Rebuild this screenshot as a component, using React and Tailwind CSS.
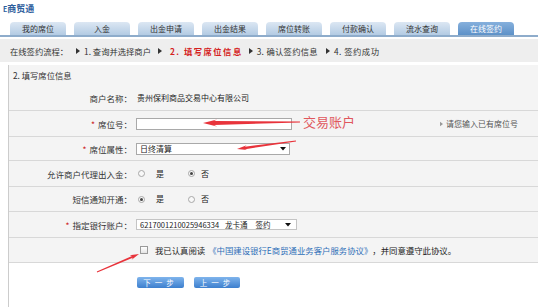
import React from "react";

const tabs = ["我的席位", "入金", "出金申请", "出金结果", "席位转账", "付款确认", "流水查询", "在线签约"];

// tapered red arrow used for the screenshot annotations
function arrowPoints(hx, hy, tx, ty, headLen, headW, neckW, tailW) {
  const dx = tx - hx, dy = ty - hy;
  const L = Math.hypot(dx, dy);
  const ux = dx / L, uy = dy / L;
  const px = -uy, py = ux;
  const at = (d, w) => [hx + ux * d + px * w, hy + uy * d + py * w];
  const pts = [
    at(0, 0),
    at(headLen, headW / 2),
    at(headLen * 0.8, neckW / 2),
    at(L, tailW / 2),
    at(L, -tailW / 2),
    at(headLen * 0.8, -neckW / 2),
    at(headLen, -headW / 2),
  ];
  return pts.map((p) => p.map((v) => v.toFixed(1)).join(",")).join(" ");
}

function Tri({ className = "" }) {
  return (
    <svg width="4" height="6" viewBox="0 0 4 6" className={className}>
      <path d="M0 0 L4 3 L0 6 Z" fill="currentColor" />
    </svg>
  );
}

function Caret() {
  return (
    <svg width="6" height="4" viewBox="0 0 6 4">
      <path d="M0 0 H6 L3 3.5 Z" fill="#111" />
    </svg>
  );
}

function Radio({ on }) {
  return (
    <span className="w-[7px] h-[7px] rounded-full border border-[#a8a8a8] bg-[#f8f8f8] flex items-center justify-center">
      {on && <span className="w-[3px] h-[3px] rounded-full bg-[#444]" />}
    </span>
  );
}

function Row({ h, label, req, children, extra }) {
  return (
    <div className={`flex items-center border-b border-[#d8d8d8] whitespace-nowrap ${h}`}>
      <div className="w-[123px] shrink-0 text-right text-[8.5px] leading-[12px] text-[#333]">
        {req && <span className="text-[#cc2222] mr-[3px]">*</span>}
        {label}
      </div>
      <div className="ml-[4px] min-w-[296px] shrink-0 flex items-center">{children}</div>
      {extra}
    </div>
  );
}

export default function App() {
  return (
    <div className="relative w-[538px] h-[307px] overflow-hidden bg-white text-[#333] font-['Noto_Sans_CJK_SC','Noto_Sans',sans-serif]">
      {/* title */}
      <div className="h-[22px] pl-[3px] pt-[3px] text-[9px] leading-[12px] font-bold text-[#2c5d9c]">
        <span className="text-[7px]">E</span>商贸通
      </div>

      {/* tabs */}
      <div className="flex gap-[8px] pl-[10px] border-b-2 border-[#8eaccb]">
        {tabs.map((t, i) =>
          i === tabs.length - 1 ? (
            <div
              key={t}
              className="w-[56px] h-[13px] rounded-t-[4px] bg-gradient-to-b from-[#86b0dc] to-[#5d91c8] text-white text-[8px] leading-[13px] text-center"
            >
              {t}
            </div>
          ) : (
            <div
              key={t}
              className="w-[56px] h-[13px] rounded-t-[4px] bg-gradient-to-b from-[#dce7f3] to-[#b3cbe3] text-[#333] text-[8px] leading-[13px] text-center"
            >
              {t}
            </div>
          )
        )}
      </div>

      {/* step bar */}
      <div className="mt-[2px] h-[23px] bg-[#eeeeee] flex items-center pl-[10px] pt-[1px] text-[8.3px] text-[#333] whitespace-nowrap">
        <span>在线签约流程：</span>
        <Tri className="ml-[8px] text-[#333]" />
        <span className="ml-[4px]">1. 查询并选择商户</span>
        <Tri className="ml-[7px] text-[#333]" />
        <span className="ml-[8px] text-[#d42020] font-bold tracking-[1.5px]">2. 填写席位信息</span>
        <Tri className="ml-[6px] text-[#333]" />
        <span className="ml-[4px] tracking-[0.3px]">3. 确认签约信息</span>
        <Tri className="ml-[8px] text-[#333]" />
        <span className="ml-[4px] tracking-[0.5px]">4. 签约成功</span>
      </div>

      {/* form panel */}
      <div className="mt-[3px] ml-[8px] h-[250px] border-l border-[#cccccc]">
        <div className="bg-[#f4f4f4]">
          <div className="h-[20px] flex items-center pl-[4px] text-[8.3px] text-[#333]">2. 填写席位信息</div>

          <Row h="h-[26px]" label="商户名称：">
            <span className="ml-[1px] text-[8px] text-[#222]">贵州保利商品交易中心有限公司</span>
          </Row>

          <Row
            h="h-[26px]"
            label="席位号："
            req
            extra={
              <div className="ml-[8px] flex items-center gap-[3px] text-[8px] text-[#555]">
                <Tri className="text-[#999] w-[3px]" />
                <span>请您输入已有席位号</span>
              </div>
            }
          >
            <div className="w-[156px] h-[12px] border border-[#a9a9a9] bg-white" />
          </Row>

          <Row h="h-[24px]" label="席位属性：" req>
            <div className="w-[154px] h-[12px] border border-[#a9a9a9] bg-white flex items-center justify-between pl-[3px] pr-[3px]">
              <span className="text-[8px] text-[#222] leading-[10px]">日终清算</span>
              <Caret />
            </div>
          </Row>

          <Row h="h-[26px]" label="允许商户代理出入金：">
            <div className="flex items-center text-[8px] text-[#222]">
              <span className="ml-[2px]"><Radio /></span>
              <span className="ml-[11px]">是</span>
              <span className="ml-[24px]"><Radio on /></span>
              <span className="ml-[6px]">否</span>
            </div>
          </Row>

          <Row h="h-[25px]" label="短信通知开通：">
            <div className="flex items-center text-[8px] text-[#222]">
              <span className="ml-[2px]"><Radio on /></span>
              <span className="ml-[11px]">是</span>
              <span className="ml-[24px]"><Radio /></span>
              <span className="ml-[6px]">否</span>
            </div>
          </Row>

          <Row h="h-[26px]" label="指定银行账户：" req>
            <div className="w-[161px] h-[11px] border border-[#c4c4c4] bg-white flex items-center pl-[3px] pr-[5px] text-[7.5px] text-[#222] leading-[10px]">
              <span>6217001210025946334</span>
              <span className="ml-[6px]">龙卡通</span>
              <span className="ml-[8px]">签约</span>
              <span className="ml-auto"><Caret /></span>
            </div>
          </Row>

          <Row h="h-[25px]" label="">
            <div className="flex items-center text-[8.4px]">
              <span className="ml-[4px] shrink-0 w-[8px] h-[8px] border border-[#9a9a9a] bg-gradient-to-b from-white to-[#e4e4e4]" />
              <span className="ml-[7px] text-[#222]">我已认真阅读</span>
              <span className="ml-[3px] text-[#2f6fb8]">《中国建设银行E商贸通业务客户服务协议》</span>
              <span className="text-[#222]">，并同意遵守此协议。</span>
            </div>
          </Row>
        </div>

        {/* buttons */}
        <div className="flex gap-[10px] pl-[128px] mt-[14px]">
          <button className="w-[47px] h-[11px] rounded-[2px] bg-gradient-to-b from-[#7fb4ec] to-[#3c7fce] text-white text-[7.5px] leading-[11px] tracking-[4px]">
            下一步
          </button>
          <button className="w-[46px] h-[11px] rounded-[2px] bg-gradient-to-b from-[#7fb4ec] to-[#3c7fce] text-white text-[7.5px] leading-[11px] tracking-[4px]">
            上一步
          </button>
        </div>
      </div>

      {/* annotations laid over the page */}
      <svg className="absolute inset-0 pointer-events-none" width="538" height="307" viewBox="0 0 538 307">
        <polygon points={arrowPoints(203, 123, 300, 122, 14, 7, 4, 1)} fill="#e8333b" />
        <polygon points={arrowPoints(237, 149, 296, 141, 10, 5, 2.5, 0.8)} fill="#e8333b" />
        <polygon points={arrowPoints(139, 254, 97, 272, 9, 5, 2, 0.8)} fill="#e8333b" />
      </svg>
      <div className="absolute left-[303px] top-[113px] text-[13px] leading-[18px] text-[#e0575d]">交易账户</div>
    </div>
  );
}
